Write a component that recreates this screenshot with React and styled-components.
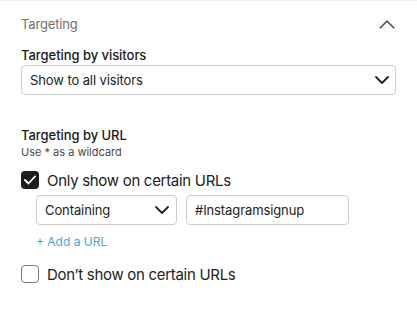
import React from "react";
import styled, { createGlobalStyle } from "styled-components";

const Global = createGlobalStyle`
  html, body { margin: 0; padding: 0; background: #fff; }
  body { font-family: Inter, "Noto Sans", sans-serif; -webkit-font-smoothing: antialiased; }
  * { box-sizing: border-box; }
`;

const Panel = styled.section`
  border-top: 1px solid #f0f0f0;
  padding: 0 21px 20px 21px;
  width: 417px;
`;

const Header = styled.div`
  display: flex;
  align-items: center;
  justify-content: space-between;
  padding-top: 13px;
  height: 33px;
`;

const HeaderTitle = styled.span`
  font-size: 13px;
  letter-spacing: -0.15px;
  line-height: 20px;
  color: #6f6f6f;
`;

const CaretButton = styled.span`
  display: flex;
  align-items: center;
  margin-right: 1px;
  color: #555;
`;

const Group = styled.div`
  display: flex;
  flex-direction: column;
  margin-top: ${(p) => p.$mt || 0}px;
`;

const Label = styled.div`
  font-size: 13px;
  letter-spacing: -0.05px;
  line-height: ${(p) => p.$lh || 20}px;
  font-weight: 500;
  color: #1a1a1a;
`;

const Hint = styled.div`
  font-size: 11px;
  line-height: 16px;
  color: #4a4a4a;
`;

const SelectBox = styled.div`
  display: flex;
  align-items: center;
  justify-content: space-between;
  height: 30px;
  width: ${(p) => (p.$w ? p.$w + "px" : "100%")};
  padding: 0 ${(p) => p.$pr || 6}px 0 ${(p) => p.$pl || 8}px;
  border: 1px solid #cdcdcd;
  border-radius: 4px;
  font-size: 13px;
  letter-spacing: -0.1px;
  color: #222;
  background: #fff;
`;

const CheckRow = styled.label`
  display: flex;
  align-items: center;
  gap: 8px;
  height: 18px;
  margin-top: ${(p) => p.$mt || 0}px;
  font-size: 15px;
  letter-spacing: -0.3px;
  color: #222;
`;

const Box = styled.span`
  width: 18px;
  height: 18px;
  border-radius: 4px;
  flex: none;
  display: flex;
  align-items: center;
  justify-content: center;
  background: ${(p) => (p.$checked ? "#1e1e1e" : "#fff")};
  border: ${(p) => (p.$checked ? "none" : "1.5px solid #7a7a7a")};
`;

const Nested = styled.div`
  display: flex;
  flex-direction: column;
  padding-left: 15px;
  margin-top: 6px;
`;

const InputRow = styled.div`
  display: flex;
  gap: 9px;
`;

const AddLink = styled.a`
  font-size: 12px;
  line-height: 16px;
  color: #4aa3d6;
  margin-top: 9px;
  text-decoration: none;
`;

const ChevronWrap = styled.span`
  display: inline-flex;
  svg { width: ${(p) => (p.$big ? 16 : 14)}px; height: ${(p) => (p.$big ? 9 : 8)}px; }
`;

const Chevron = ({ up }) => (
  <ChevronWrap $big={up}>
    <svg viewBox="0 0 14 8" fill="none">
      <polyline
        points={up ? "1,7 7,1 13,7" : "1,1 7,7 13,1"}
        stroke="currentColor"
        strokeWidth={up ? 1.3 : 1.8}
        strokeLinecap="round"
        strokeLinejoin="round"
      />
    </svg>
  </ChevronWrap>
);

const Check = () => (
  <svg width="12" height="10" viewBox="0 0 12 10" fill="none">
    <polyline points="1,5 4.5,8.5 11,1.5" stroke="#fff" strokeWidth="1.8" strokeLinecap="round" strokeLinejoin="round" />
  </svg>
);

export default function App() {
  return (
    <>
      <Global />
      <Panel>
        <Header>
          <HeaderTitle>Targeting</HeaderTitle>
          <CaretButton>
            <Chevron up />
          </CaretButton>
        </Header>
        <Group $mt={11}>
          <Label>Targeting by visitors</Label>
          <SelectBox $pr={6}>
            <span>Show to all visitors</span>
            <Chevron />
          </SelectBox>
        </Group>
        <Group $mt={31}>
          <Label $lh={18}>Targeting by URL</Label>
          <Hint>Use * as a wildcard</Hint>
          <CheckRow $mt={11}>
            <Box $checked><Check /></Box>
            <span>Only show on certain URLs</span>
          </CheckRow>
          <Nested>
            <InputRow>
              <SelectBox $w={141} $pr={7} $pl={8}>
                <span>Containing</span>
                <Chevron />
              </SelectBox>
              <SelectBox $w={163} $pl={8}>
                <span>#Instagramsignup</span>
              </SelectBox>
            </InputRow>
            <AddLink>+ Add a URL</AddLink>
          </Nested>
          <CheckRow $mt={15}>
            <Box />
            <span>Don’t show on certain URLs</span>
          </CheckRow>
        </Group>
      </Panel>
    </>
  );
}
